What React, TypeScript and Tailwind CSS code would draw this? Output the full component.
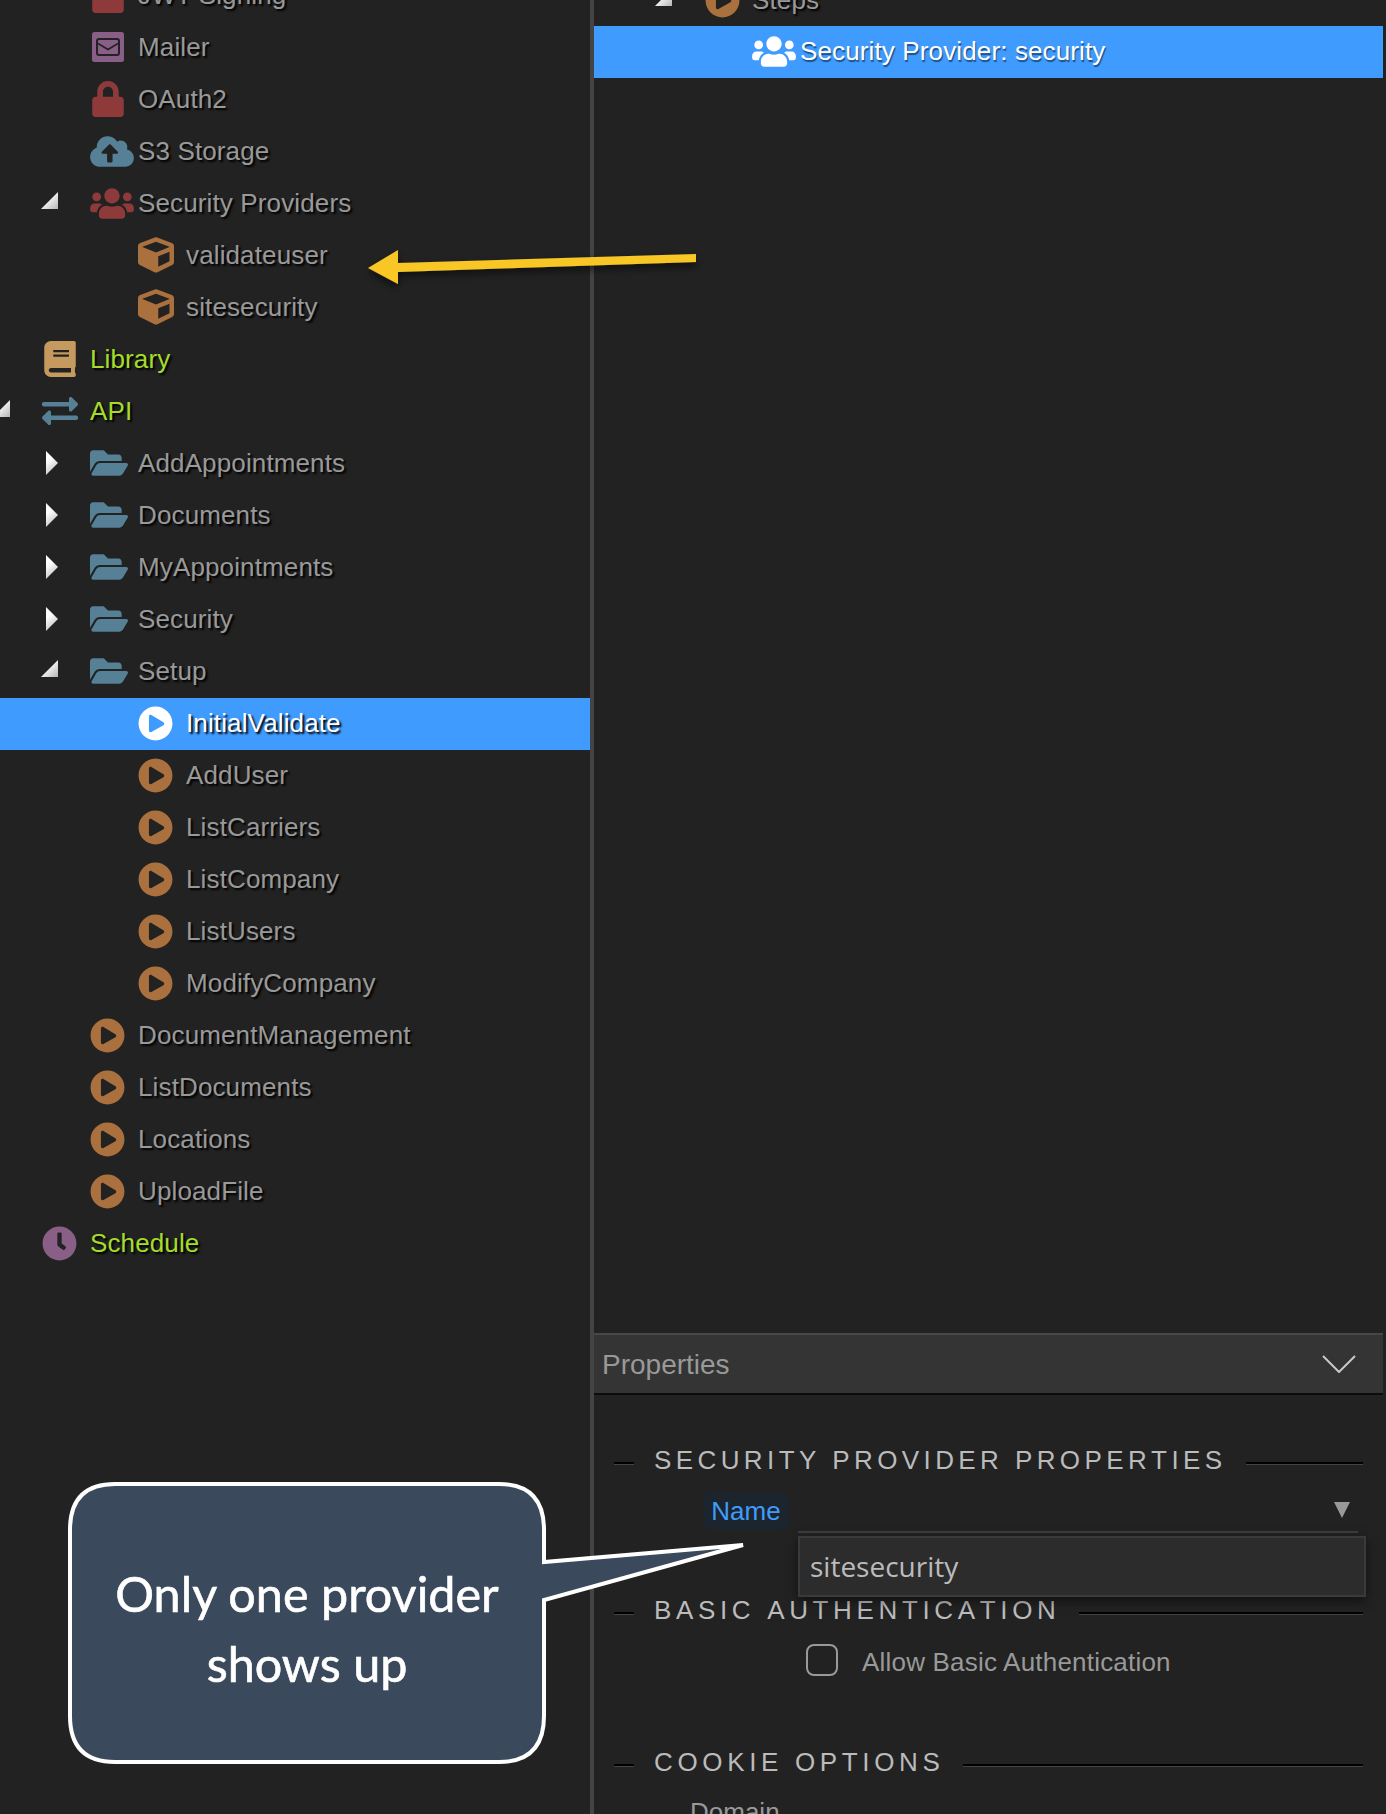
import type { ReactNode } from "react";
import {
  FaBook,
  FaClock,
  FaCloudUploadAlt,
  FaCube,
  FaExchangeAlt,
  FaFolderOpen,
  FaLock,
  FaPlayCircle,
  FaUsers,
} from "react-icons/fa";

type Level = 1 | 2 | 3;
type Twisty = "open" | "closed";

const spacerClass: Record<Level, string> = {
  1: "w-[42px]",
  2: "w-[90px]",
  3: "w-[138px]",
};

function TwistyIcon({ kind }: { kind: Twisty }) {
  if (kind === "open") {
    return (
      <svg viewBox="0 0 17 17" className="h-[17px] w-[17px] shrink-0 -translate-y-[3px]">
        <defs>
          <linearGradient id="twOpen" x1="0" y1="0" x2="1" y2="1">
            <stop offset="0.35" stopColor="#ffffff" />
            <stop offset="1" stopColor="#b5b5b5" />
          </linearGradient>
        </defs>
        <path d="M17 0V17H0Z" fill="url(#twOpen)" />
      </svg>
    );
  }
  return (
    <svg viewBox="0 0 12 24" className="h-[24px] w-[12px] shrink-0">
      <defs>
        <linearGradient id="twClosed" x1="0" y1="0" x2="0.4" y2="1">
          <stop offset="0.4" stopColor="#ffffff" />
          <stop offset="1" stopColor="#c4c4c4" />
        </linearGradient>
      </defs>
      <path d="M0 0L12 12L0 24Z" fill="url(#twClosed)" />
    </svg>
  );
}

function MailIcon() {
  return (
    <svg viewBox="0 0 32 30" className="ml-[2px] h-[30px] w-[32px]">
      <rect width="32" height="30" rx="2.5" fill="#8a5f87" />
      <rect x="5" y="7" width="22" height="16" rx="2" fill="none" stroke="#222222" strokeWidth="2" />
      <path d="M6 11.5L16 17.5L26 11.5" fill="none" stroke="#222222" strokeWidth="1.6" />
    </svg>
  );
}

const play = <FaPlayCircle className="h-[35px] w-[35px] text-[#aa703e]" />;
const cube = <FaCube className="h-[36px] w-[36px] text-[#aa703e]" />;
const folder = <FaFolderOpen className="h-[34px] w-[38px] text-[#568096]" />;

function Row({
  level,
  icon,
  label,
  twisty,
  lime,
  selected,
}: {
  level: Level;
  icon: ReactNode;
  label: string;
  twisty?: Twisty;
  lime?: boolean;
  selected?: boolean;
}) {
  return (
    <div className={`flex h-[52px] items-center pb-[2px] ${selected ? "bg-[#409bff]" : ""}`}>
      <div className={`flex shrink-0 justify-end pr-[32px] ${spacerClass[level]}`}>
        {twisty && <TwistyIcon kind={twisty} />}
      </div>
      <div className="flex w-[48px] shrink-0 items-center">{icon}</div>
      <span
        className={`whitespace-nowrap text-[26px] tracking-[0.13px] [text-shadow:2px_2px_2px_#000] ${
          selected ? "text-white [text-shadow:1px_2px_1px_#1d4f86]" : lime ? "text-[#a4dc2a]" : "text-[#999999]"
        }`}
      >
        {label}
      </span>
    </div>
  );
}

function Legend({ title, spacing }: { title: string; spacing: string }) {
  return (
    <div className="flex h-[30px] items-center pl-[20px] pr-[20px]">
      <div className="mt-[6px] h-[3px] w-[20px] border-t-2 border-b border-t-black border-b-[#444444]" />
      <span className={`ml-[20px] mr-[19px] whitespace-nowrap text-[26px] text-[#bbbbbb] [font-kerning:none] ${spacing}`}>{title}</span>
      <div className="mt-[6px] h-[3px] flex-1 border-t-2 border-b border-t-black border-b-[#444444]" />
    </div>
  );
}

export default function App() {
  return (
    <div className="relative flex h-[1814px] w-[1386px] overflow-hidden bg-[#222222] font-['Liberation_Sans',Arial,sans-serif]">
      <aside className="-mt-[30px] w-[590px] shrink-0">
        <Row level={2} icon={<FaLock className="ml-[2px] h-[36px] w-[32px] text-[#8e3a3a]" />} label="JWT Signing" />
        <Row level={2} icon={<MailIcon />} label="Mailer" />
        <Row level={2} icon={<FaLock className="ml-[2px] h-[36px] w-[32px] text-[#8e3a3a]" />} label="OAuth2" />
        <Row level={2} icon={<FaCloudUploadAlt className="h-[35px] w-[44px] text-[#568096]" />} label="S3 Storage" />
        <Row level={2} twisty="open" icon={<FaUsers className="h-[35px] w-[44px] text-[#8e3a3a]" />} label="Security Providers" />
        <Row level={3} icon={cube} label="validateuser" />
        <Row level={3} icon={cube} label="sitesecurity" />
        <Row level={1} lime icon={<FaBook className="ml-[2px] h-[36px] w-[32px] text-[#c49a5f]" />} label="Library" />
        <Row level={1} lime twisty="open" icon={<FaExchangeAlt className="h-[36px] w-[36px] text-[#568096]" />} label="API" />
        <Row level={2} twisty="closed" icon={folder} label="AddAppointments" />
        <Row level={2} twisty="closed" icon={folder} label="Documents" />
        <Row level={2} twisty="closed" icon={folder} label="MyAppointments" />
        <Row level={2} twisty="closed" icon={folder} label="Security" />
        <Row level={2} twisty="open" icon={folder} label="Setup" />
        <Row level={3} selected icon={<FaPlayCircle className="h-[35px] w-[35px] text-white" />} label="InitialValidate" />
        <Row level={3} icon={play} label="AddUser" />
        <Row level={3} icon={play} label="ListCarriers" />
        <Row level={3} icon={play} label="ListCompany" />
        <Row level={3} icon={play} label="ListUsers" />
        <Row level={3} icon={play} label="ModifyCompany" />
        <Row level={2} icon={play} label="DocumentManagement" />
        <Row level={2} icon={play} label="ListDocuments" />
        <Row level={2} icon={play} label="Locations" />
        <Row level={2} icon={play} label="UploadFile" />
        <Row level={1} lime icon={<FaClock className="h-[35px] w-[35px] text-[#8a5f87]" />} label="Schedule" />
      </aside>

      <div className="w-[4px] shrink-0 bg-[#444444]" />

      <main className="mr-[3px] flex min-w-0 flex-1 flex-col">
        <div className="h-[1333px] shrink-0 overflow-hidden">
          <div className="-mt-[26px]">
            <div className="flex h-[52px] items-center">
              <div className="flex w-[111px] shrink-0 justify-end pr-[33px]">
                <TwistyIcon kind="open" />
              </div>
              <div className="flex w-[47px] shrink-0 items-center">{play}</div>
              <span className="text-[26px] tracking-[0.13px] text-[#999999] [text-shadow:2px_2px_2px_#000]">Steps</span>
            </div>
            <div className="flex h-[52px] items-center bg-[#409bff] pb-[2px]">
              <FaUsers className="ml-[158px] h-[35px] w-[44px] shrink-0 text-white" />
              <span className="ml-[4px] text-[26px] tracking-[0.13px] text-white [text-shadow:1px_2px_1px_#1d4f86]">Security Provider: security</span>
            </div>
          </div>
        </div>

        <div className="flex h-[62px] shrink-0 items-center justify-between border-t-2 border-b-2 border-t-[#484848] border-b-[#0c0c0c] bg-[#343434] pl-[8px] pr-[27px]">
          <span className="pt-[2px] text-[28px] text-[#999999]">Properties</span>
          <svg viewBox="0 0 34 18" className="h-[18px] w-[34px]">
            <path d="M1 1L17 17L33 1" fill="none" stroke="#c8c8c8" strokeWidth="2" />
          </svg>
        </div>

        <div className="mt-[50px]">
          <Legend title="SECURITY PROVIDER PROPERTIES" spacing="tracking-[4.4px]" />
        </div>

        <div className="ml-[110px] mr-[25px] mt-[17px] flex">
          <div className="flex h-[38px] w-[84px] items-center justify-center rounded-lg bg-[#1c252d] text-[26px] text-[#3f9cfb]">Name</div>
          <div className="relative ml-[10px] flex h-[41px] flex-1 items-center justify-end border-b-2 border-b-[#3d3d3d] pr-[8px]">
            <svg viewBox="0 0 16 16" className="mb-[4px] h-[16px] w-[16px]">
              <path d="M0 0H16L8 16Z" fill="#999999" />
            </svg>
            <div className="absolute left-0 top-[44px] flex h-[61px] w-[568px] items-center border-2 border-[#3a3a3a] bg-[#2c2c2c] pb-[2px] pl-[10px] font-['Open_Sans',sans-serif] text-[28px] text-[#bbbbbb] shadow-[0_4px_10px_rgba(0,0,0,0.5)]">
              sitesecurity
            </div>
          </div>
        </div>

        <div className="mt-[62px]">
          <Legend title="BASIC AUTHENTICATION" spacing="tracking-[4.65px]" />
        </div>

        <div className="ml-[212px] mt-[15px] flex h-[39px] items-center">
          <div className="h-[32px] w-[32px] rounded-lg border-2 border-[#999999]" />
          <span className="ml-[24px] pt-[5px] text-[26px] tracking-[0.2px] text-[#999999]">Allow Basic Authentication</span>
        </div>

        <div className="mt-[68px]">
          <Legend title="COOKIE OPTIONS" spacing="tracking-[4.65px]" />
        </div>

        <div className="ml-[96px] mt-[16px] text-[26px] text-[#999999]">Domain</div>
      </main>

      {/* annotations pasted on top of the screenshot */}
      <svg viewBox="0 0 1386 1814" className="pointer-events-none absolute left-0 top-0 h-[1814px] w-[1386px]">
        <defs>
          <filter id="arrowShadow" x="-10%" y="-50%" width="120%" height="250%">
            <feDropShadow dx="0" dy="4" stdDeviation="4" floodColor="#000" floodOpacity="0.6" />
          </filter>
        </defs>
        <path
          d="M696 254L696 262L398 272L398 284L368 268L398 250L398 263Z"
          fill="#f8c726"
          filter="url(#arrowShadow)"
        />
        <path
          d="M115 1484H499Q544 1484 544 1530V1562L743 1545L544 1600V1716Q544 1762 499 1762H115Q70 1762 70 1716V1530Q70 1484 115 1484Z"
          fill="#3b495c"
          stroke="#ffffff"
          strokeWidth="4"
        />
      </svg>
      <div className="absolute left-[70px] top-[1558px] w-[474px] text-center font-['Lato',sans-serif] text-[48.5px] leading-[70px] text-white [-webkit-text-stroke:0.6px_#ffffff]">
        Only one provider
        <br />
        shows up
      </div>
    </div>
  );
}
